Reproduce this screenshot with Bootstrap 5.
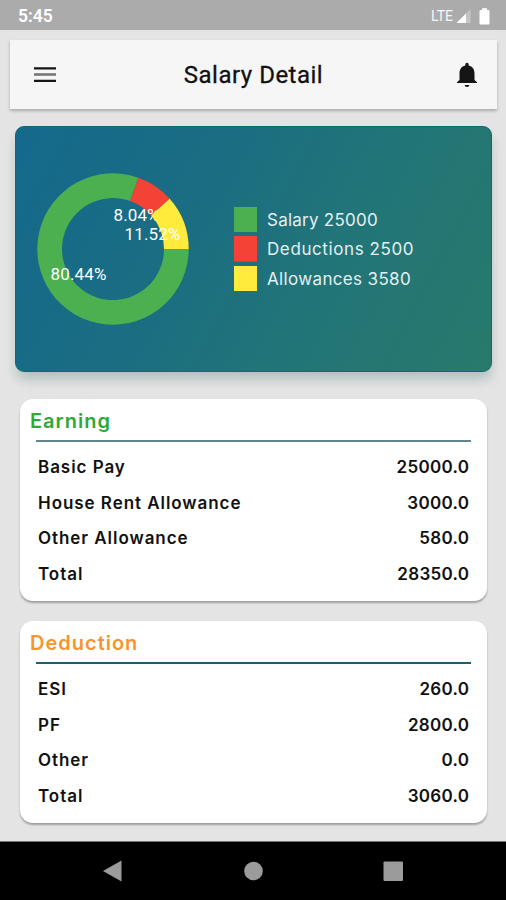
<!DOCTYPE html>
<html lang="en">
<head>
<meta charset="utf-8">
<meta name="viewport" content="width=device-width, initial-scale=1">
<title>Salary Detail</title>
<link href="https://cdn.jsdelivr.net/npm/bootstrap@5.3.0/dist/css/bootstrap.min.css" rel="stylesheet">
<style>
  body { background: #e4e4e4; font-family: Inter, "Open Sans", sans-serif; color: #111; height: 900px; overflow: hidden; }
  svg { display: block; }
  .status-bar { height: 30px; background: #ababab; font-family: Roboto, sans-serif; padding: 2px 16px 0 18px; }
  .status-time { font-size: 17.5px; font-weight: 600; line-height: 28px; }
  .status-net { font-size: 14px; line-height: 28px; opacity: .9; margin-right: 3px; }
  .app-bar { height: 69px; margin: 10px 9px 0 10px; background: #f6f6f6; box-shadow: 0 2px 3px rgba(0,0,0,.25); padding: 0 15px 0 23px; }
  .app-title { font: 400 24px/30px Roboto, sans-serif; letter-spacing: .5px; margin: 0 2px 0 0; -webkit-text-stroke: .3px #111; }
  .chart-card { height: 246px; margin: 17px 14px 0 15px; border-radius: 9px; border: 1px solid #0d6a75;
    background: linear-gradient(118deg, #15698c 0%, #1a6d82 35%, #227577 65%, #277a6b 100%);
    box-shadow: 2px 9px 12px -2px rgba(60,110,105,.2), -2px 9px 12px -2px rgba(60,110,105,.12); padding-left: 21px; }
  .donut text { font: 400 17px Roboto, sans-serif; fill: #fff; }
  .legend-list { gap: 4px; margin-left: 45px; }
  .legend-item { height: 25.6px; font-size: 17px; color: #e4f0f3; gap: 10px; }
  .legend-item span { padding-top: 2px; letter-spacing: .25px; }
  .legend-item .spaced { letter-spacing: .6px; }
  .legend-item .semispaced { letter-spacing: .35px; }
  .legend-swatch { width: 23px; height: 25.6px; }
  .pay-card { height: 202px; margin: 0 19px 0 20px; border-radius: 13px; background: #fff; box-shadow: 0 2px 2px rgba(0,0,0,.3); padding: 0 16px; }
  .pay-title { font-size: 20px; font-weight: 600; line-height: 24px; letter-spacing: 1px; padding-top: 10px; margin: 0 0 6px -6px; }
  .pay-rule { height: 2px; background: #648590; margin-top: 7px; }
  .pay-rule-dark { background: #1b6171; }
  .pay-rows { padding: 8px 2px 0 2px; }
  .pay-row { height: 35.7px; font-size: 17px; font-weight: 600; }
  .pay-label { letter-spacing: .95px; }
  .pay-value { letter-spacing: .3px; margin-right: -.3px; }
  .nav-keys { height: 59px; background: #000; border-top: 1px solid #777; }
  .green-title { color: #2fa836; } .orange-title { color: #f7952c; }
</style>
</head>
<body class="d-flex flex-column">
<div class="status-bar d-flex align-items-center text-white flex-shrink-0">
  <span class="status-time me-auto">5:45</span>
  <span class="status-net">LTE</span>
  <svg width="15" height="16" viewBox="0 0 15 16"><path d="M14.500 1v14H.5z" fill="#fff" opacity=".3"/><path d="M10 5.500V15H.5z" fill="#fff"/></svg>
  <svg class="ms-2" width="11" height="17" viewBox="0 0 11 17"><path d="M3 2V.3h5V2h1.300q1.200 0 1.200 1.200v12q0 1.300-1.200 1.300H1.700Q.5 16.500.5 15.200V3.200Q.5 2 1.700 2z" fill="#fff"/></svg>
</div>
<header class="app-bar d-flex align-items-center justify-content-between flex-shrink-0">
  <svg width="24" height="18" viewBox="0 0 24 18"><path d="M1 2.300h22M1 14.800h22" stroke="#151515" stroke-width="2.200"/><path d="M1 8.500h22" stroke="#777" stroke-width="2.600"/></svg>
  <h1 class="app-title">Salary Detail</h1>
  <svg width="30" height="30" viewBox="0 0 30 30"><path d="M15 27c1.400 0 2.300-.9 2.300-2h-4.600c0 1.100.9 2 2.300 2zM22.500 20v-6.700c0-3.900-2-6.900-5.800-7.800v-.8c0-1-.7-1.900-1.700-1.900s-1.700.9-1.700 1.900v.8c-3.800.9-5.800 3.900-5.800 7.800V20L5 22.200V23h20v-.8z" fill="#151515"/></svg>
</header>
<section class="chart-card d-flex align-items-center flex-shrink-0">
  <svg class="donut" width="152" height="152" viewBox="37 173 152 152" role="img" aria-label="Salary breakdown">
    <path d="M188.700 249A75.700 75.700 0 1 1 138.400 177.700L130.100 201A51 51 0 1 0 164 249z" fill="#4caf50"/>
    <path d="M138.400 177.700A75.700 75.700 0 0 1 169.700 198.800L151.200 215.200A51 51 0 0 0 130.100 201z" fill="#f44336"/>
    <text x="113.500" y="220.500" textLength="46">8.04%</text>
    <path d="M169.700 198.800A75.700 75.700 0 0 1 188.700 249H164A51 51 0 0 0 151.200 215.200z" fill="#ffeb3b"/>
    <text x="124.500" y="240" textLength="56">11.52%</text>
    <text x="50.500" y="279.500" textLength="56">80.44%</text>
  </svg>
  <div class="legend-list d-flex flex-column">
    <div class="legend-item d-flex align-items-center"><svg class="legend-swatch"><rect width="100%" height="100%" fill="#4caf50"/></svg><span>Salary 25000</span></div>
    <div class="legend-item d-flex align-items-center"><svg class="legend-swatch"><rect width="100%" height="100%" fill="#f44336"/></svg><span class="spaced">Deductions 2500</span></div>
    <div class="legend-item d-flex align-items-center"><svg class="legend-swatch"><rect width="100%" height="100%" fill="#ffeb3b"/></svg><span class="semispaced">Allowances 3580</span></div>
  </div>
</section>
<section class="pay-card flex-shrink-0" style="margin-top:27px">
  <h2 class="pay-title green-title">Earning</h2>
  <div class="pay-rule"></div>
  <div class="pay-rows">
    <div class="pay-row d-flex align-items-center justify-content-between"><span class="pay-label">Basic Pay</span><span class="pay-value">25000.0</span></div>
    <div class="pay-row d-flex align-items-center justify-content-between"><span class="pay-label">House Rent Allowance</span><span class="pay-value">3000.0</span></div>
    <div class="pay-row d-flex align-items-center justify-content-between"><span class="pay-label">Other Allowance</span><span class="pay-value">580.0</span></div>
    <div class="pay-row d-flex align-items-center justify-content-between"><span class="pay-label">Total</span><span class="pay-value">28350.0</span></div>
  </div>
</section>
<section class="pay-card flex-shrink-0" style="margin-top:20px">
  <h2 class="pay-title orange-title">Deduction</h2>
  <div class="pay-rule pay-rule-dark"></div>
  <div class="pay-rows">
    <div class="pay-row d-flex align-items-center justify-content-between"><span class="pay-label">ESI</span><span class="pay-value">260.0</span></div>
    <div class="pay-row d-flex align-items-center justify-content-between"><span class="pay-label">PF</span><span class="pay-value">2800.0</span></div>
    <div class="pay-row d-flex align-items-center justify-content-between"><span class="pay-label">Other</span><span class="pay-value">0.0</span></div>
    <div class="pay-row d-flex align-items-center justify-content-between"><span class="pay-label">Total</span><span class="pay-value">3060.0</span></div>
  </div>
</section>
<nav class="nav-keys d-flex justify-content-center align-items-center mt-auto flex-shrink-0">
  <svg width="300" height="24" viewBox="0 0 300 24"><path d="M18.500 1.500v21L0 12z" fill="#9b9b9b"/><circle cx="150.500" cy="12" r="9.300" fill="#9b9b9b"/><rect x="280.500" y="2.500" width="19.500" height="19.500" rx="1" fill="#9b9b9b"/></svg>
</nav>
<script src="https://cdn.jsdelivr.net/npm/bootstrap@5.3.0/dist/js/bootstrap.bundle.min.js"></script>
</body>
</html>
